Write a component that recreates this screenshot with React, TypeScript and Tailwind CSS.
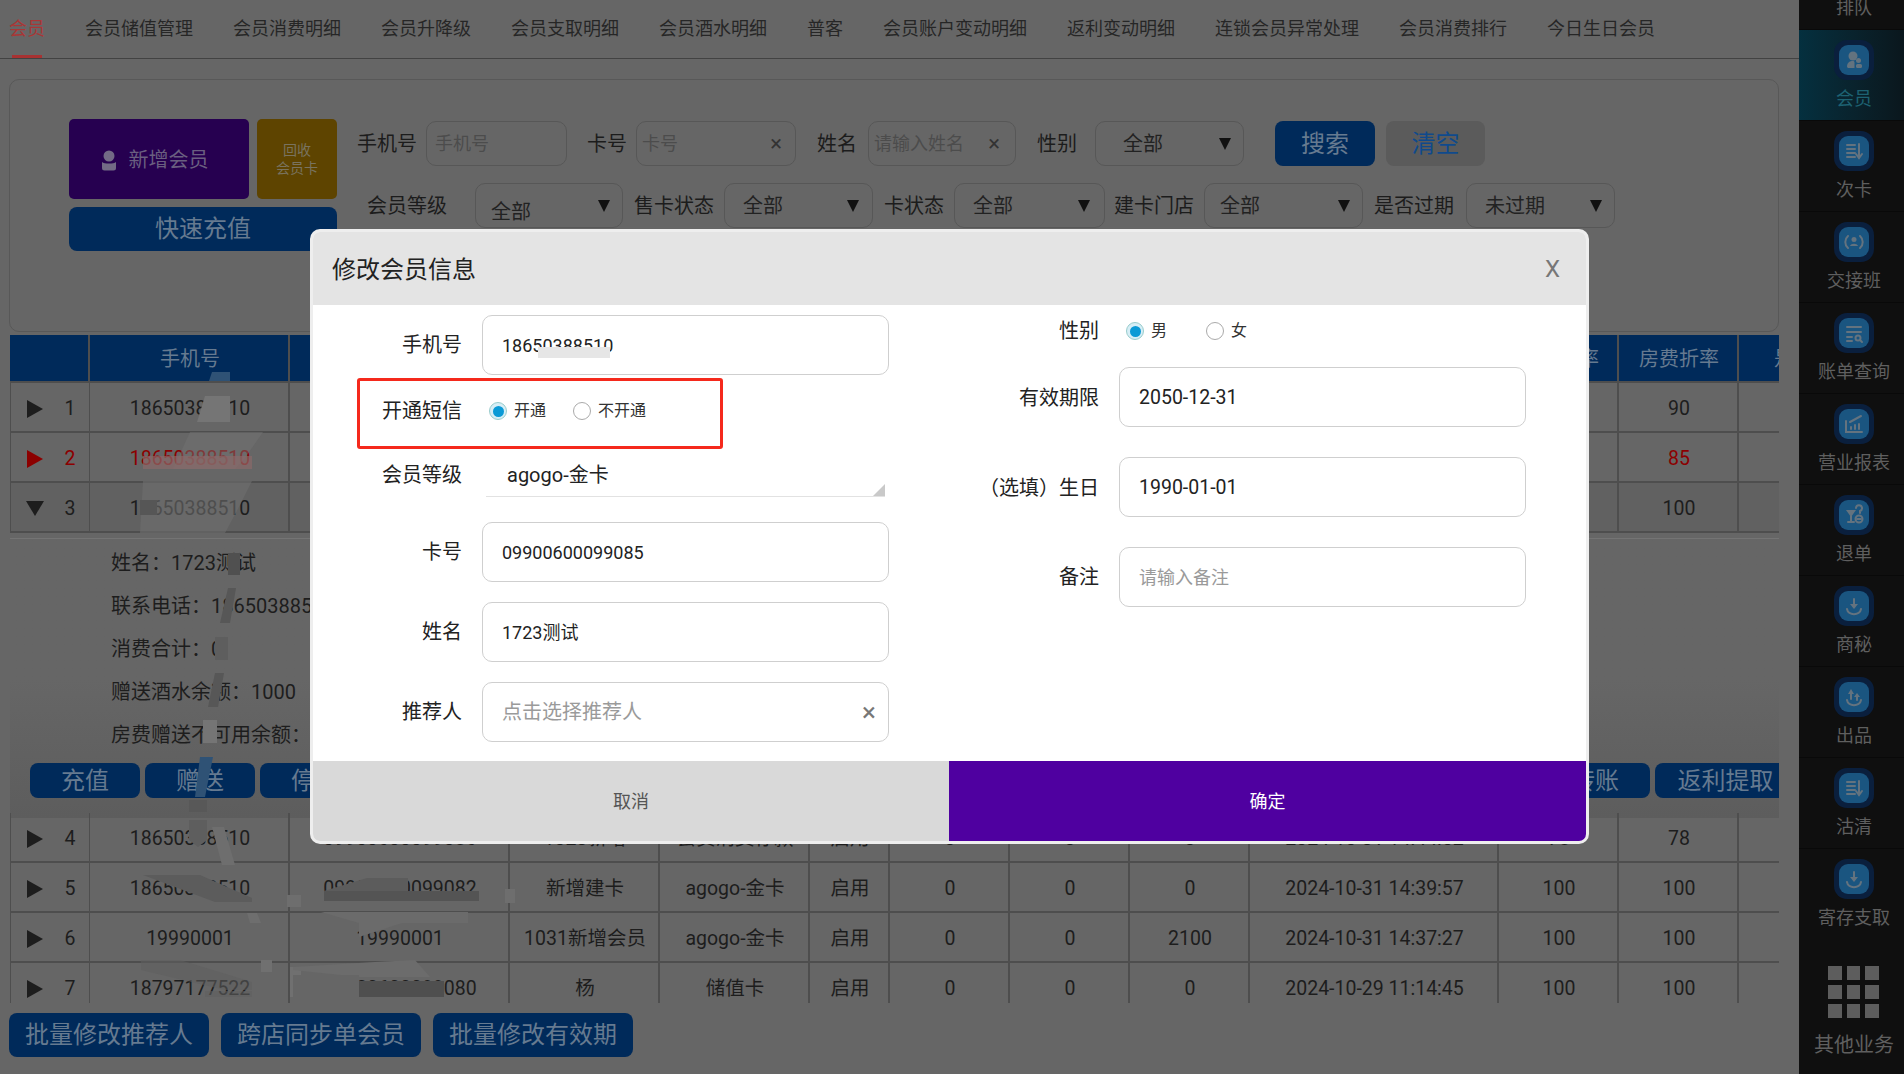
import React from "react";

const cols = "grid grid-cols-[80px_200px_220px_150px_150px_80px_120px_120px_120px_249px_120px_120px_150px]";

const tabs = ["会员储值管理","会员消费明细","会员升降级","会员支取明细","会员酒水明细","普客","会员账户变动明细","返利变动明细","连锁会员异常处理","会员消费排行","今日生日会员"];

const Label = ({ w, ml, children }: { w: string; ml: string; children: React.ReactNode }) => (
  <span className={`${w} ${ml} shrink-0 text-[20px] text-[#1c1c1c] whitespace-nowrap text-center`}>{children}</span>
);

const Arrow = () => (
  <svg width="12" height="12" viewBox="0 0 12 12" className="shrink-0"><polygon points="0,0 12,0 6,12" fill="#111" /></svg>
);

const Box = ({ cls, children }: { cls: string; children?: React.ReactNode }) => (
  <div className={`${cls} h-[45px] shrink-0 rounded-[10px] border border-[#575757] flex items-center text-[#222]`}>{children}</div>
);

function FilterPanel() {
  return (
    <div className="mx-[9px] mt-[20px] h-[253px] w-[1770px] rounded-[10px] border border-[#585858] flex pl-[59px] pt-[39px] shrink-0">
      <div className="w-[268px] shrink-0">
        <div className="flex gap-[8px]">
          <div className="w-[180px] h-[80px] rounded-[5px] bg-[#260050] flex items-center justify-center gap-[13px] pr-[8px] pt-[2px] text-[#6a5f80]">
            <svg width="14" height="21" viewBox="0 0 14 21"><circle cx="7" cy="6" r="5.5" fill="#726a85" /><path d="M0 12c2 2 12 2 14 0v6a2.500 2.500 0 0 1-2.500 2.500h-9A2.500 2.500 0 0 1 0 18z" fill="#726a85" /></svg>
            <span className="text-[20px]">新增会员</span>
          </div>
          <div className="w-[80px] h-[80px] rounded-[5px] bg-[#5e4400] flex flex-col items-center justify-center text-[14px] leading-[18px] text-[#79735f]">
            <span>回收</span><span>会员卡</span>
          </div>
        </div>
        <div className="mt-[8px] h-[44px] rounded-[8px] bg-[#002a5a] flex items-center justify-center text-[24px] text-[#667a90]">快速充值</div>
      </div>
      <div className="ml-[20px] mt-[2px]">
        <div className="flex items-center">
          <Label w="w-[60px]" ml="ml-0">手机号</Label>
          <Box cls="w-[141px] ml-[9px] pl-[8px]"><span className="text-[18px] text-[#4c4c4c]">手机号</span></Box>
          <Label w="w-[40px]" ml="ml-[20px]">卡号</Label>
          <Box cls="w-[160px] ml-[9px] pl-[5px] justify-between pr-[13px]"><span className="text-[18px] text-[#4c4c4c]">卡号</span><span className="text-[22px] text-[#333]">×</span></Box>
          <Label w="w-[40px]" ml="ml-[21px]">姓名</Label>
          <Box cls="w-[148px] ml-[11px] pl-[5px] justify-between pr-[15px]"><span className="text-[18px] text-[#4c4c4c]">请输入姓名</span><span className="text-[22px] text-[#333]">×</span></Box>
          <Label w="w-[40px]" ml="ml-[21px]">性别</Label>
          <Box cls="w-[149px] ml-[18px] pl-[27px] pr-[12px] justify-between"><span className="text-[20px]">全部</span><Arrow /></Box>
          <div className="ml-[31px] w-[100px] h-[45px] rounded-[8px] bg-[#002a5a] flex items-center justify-center text-[24px] text-[#667a90]">搜索</div>
          <div className="ml-[11px] w-[99px] h-[45px] rounded-[8px] bg-[#5b5b5b] flex items-center justify-center text-[24px] text-[#0f4a8c]">清空</div>
        </div>
        <div className="flex items-center mt-[17px]">
          <Label w="w-[80px]" ml="ml-[10px]">会员等级</Label>
          <Box cls="w-[148px] ml-[28px] pl-[15px] pr-[12px] justify-between"><span className="text-[20px] mt-[12px]">全部</span><Arrow /></Box>
          <Label w="w-[80px]" ml="ml-[11px]">售卡状态</Label>
          <Box cls="w-[149px] ml-[10px] pl-[18px] pr-[13px] justify-between"><span className="text-[20px]">全部</span><Arrow /></Box>
          <Label w="w-[60px]" ml="ml-[11px]">卡状态</Label>
          <Box cls="w-[151px] ml-[10px] pl-[18px] pr-[14px] justify-between"><span className="text-[20px]">全部</span><Arrow /></Box>
          <Label w="w-[80px]" ml="ml-[9px]">建卡门店</Label>
          <Box cls="w-[159px] ml-[10px] pl-[15px] pr-[12px] justify-between"><span className="text-[20px]">全部</span><Arrow /></Box>
          <Label w="w-[80px]" ml="ml-[11px]">是否过期</Label>
          <Box cls="w-[149px] ml-[12px] pl-[18px] pr-[12px] justify-between"><span className="text-[20px]">未过期</span><Arrow /></Box>
        </div>
      </div>
    </div>
  );
}

const headers = ["", "手机号", "卡号", "姓名", "会员等级", "状态", "储值余额", "赠送余额", "酒水余额", "创建时间", "酒水折率", "房费折率", "是否过期"];

type R = { n: number; cells: string[]; red?: boolean; open?: boolean };
const top: R[] = [
  { n: 1, cells: ["18650388510","09900600099081","张三","agogo-金卡","启用","0","0","0","2024-11-01 10:12:30","90","90",""] },
  { n: 2, cells: ["18650388510","09900600099083","李四","agogo-金卡","启用","0","0","0","2024-11-01 09:20:11","85","85",""], red: true },
  { n: 3, cells: ["18650388510","09900600099085","1723测试","agogo-金卡","启用","0","0","0","2024-10-31 17:23:40","100","100",""], open: true },
];
const bottom: R[] = [
  { n: 4, cells: ["18650388510","09900600099086","1023新增","会员消费存款","启用","0","0","0","2024-10-31 14:44:52","78","78",""] },
  { n: 5, cells: ["18650388510","09900600099082","新增建卡","agogo-金卡","启用","0","0","0","2024-10-31 14:39:57","100","100",""] },
  { n: 6, cells: ["19990001","19990001","1031新增会员","agogo-金卡","启用","0","0","2100","2024-10-31 14:37:27","100","100",""] },
  { n: 7, cells: ["18797177522","09900600099080","杨","储值卡","启用","0","0","0","2024-10-29 11:14:45","100","100",""] },
];

function Row({ r }: { r: R }) {
  const color = r.red ? "text-[#8c0000]" : "text-[#1d1d1d]";
  return (
    <div className={`${cols} h-[50px] border-b-2 border-[#4e4e4e] text-[19.500px] ${color} ${r.open ? "bg-[#616161]" : ""}`}>
      <div className="flex items-center border-x border-[#4e4e4e] pt-[3px]">
        {r.open ? (
          <svg width="18" height="15" viewBox="0 0 18 15" className="ml-[15px]"><polygon points="0,0 18,0 9,15" fill="#1d1d1d" /></svg>
        ) : (
          <svg width="16" height="18" viewBox="0 0 16 18" className="ml-[16px]"><polygon points="0,0 16,9 0,18" fill={r.red ? "#8c0000" : "#1d1d1d"} /></svg>
        )}
        <span className={`${r.open ? "ml-[16px]" : "ml-[17px]"} w-[20px] text-center`}>{r.n}</span>
      </div>
      {r.cells.map((c, i) => (
        <div key={i} className="flex items-center justify-center border-r-2 border-[#4e4e4e] whitespace-nowrap overflow-hidden pl-[2px] pt-[3px]">{c}</div>
      ))}
    </div>
  );
}

function Detail() {
  const lines = ["姓名：1723测试","联系电话：18650388510","消费合计：0","赠送酒水余额：1000","房费赠送不可用余额：0"];
  return (
    <div className="h-[280px] w-[1769px] bg-gradient-to-b from-[#666] via-[#666] to-[#5d5d5d] border-t border-[#747474] mt-[5px] -mb-[5px] flex flex-col">
      <div className="pl-[101px] pt-[10px] flex flex-col gap-[15px] text-[20px] leading-[28px] text-[#1d1d1d]">
        {lines.map((l) => <div key={l} className="whitespace-nowrap">{l}</div>)}
      </div>
      <div className="flex w-[1786px] mt-[14px] pl-[20px] text-[24px] text-[#667a90]">
        {["充值","赠送","停用"].map((t) => (
          <div key={t} className="w-[110px] mr-[5px] h-[35px] rounded-[8px] bg-[#002a5a] flex items-center justify-center">{t}</div>
        ))}
        <div className="ml-auto w-[110px] h-[35px] rounded-[8px] bg-[#002a5a] flex items-center justify-center">转账</div>
        <div className="ml-[5px] w-[141px] h-[35px] rounded-[8px] bg-[#002a5a] flex items-center justify-center">返利提取</div>
      </div>
    </div>
  );
}

function Table() {
  return (
    <div className="mx-[10px] mt-[3px] w-[1769px] h-[668px] overflow-hidden shrink-0">
      <div className={`${cols} w-[1909px] h-[46px] bg-[#002a5a] text-[20px] text-[#667a90]`}>
        {headers.map((h, i) => (
          <div key={i} className="flex items-center justify-center border-r-2 border-[#4e4e4e] whitespace-nowrap pl-[2px] pt-[2px]">{h}</div>
        ))}
      </div>
      <div className="w-[1909px] border-t-2 border-[#4e4e4e]">
        {top.map((r) => <Row key={r.n} r={r} />)}
        <Detail />
        {bottom.map((r) => <Row key={r.n} r={r} />)}
      </div>
    </div>
  );
}

const Field = ({ label, value, placeholder, w, suffix, big }: { label: string; value?: string; placeholder?: boolean; w: string; suffix?: boolean; big?: boolean }) => (
  <div className="flex items-center">
    <span className={`w-[149px] text-right text-[20px] text-[#222] whitespace-nowrap ${big ? "pt-[2px]" : ""}`}>{label}</span>
    <div className={`${w} ml-[20px] h-[60px] rounded-[10px] border border-[#cfcfcf] flex items-center justify-between pl-[19px] pr-[12px]`}>
      <span className={placeholder ? (suffix ? "text-[20px] text-[#9a9a9a]" : "text-[18px] text-[#9a9a9a]") : big ? "text-[19.500px] text-[#222] pt-[2px]" : "text-[18px] text-[#222]"}>{value}</span>
      {suffix && <span className="text-[26px] leading-none text-[#777]">×</span>}
    </div>
  </div>
);

const Radio = ({ on, text, cls }: { on?: boolean; text: string; cls: string }) => (
  <div className={`flex items-center ${cls}`}>
    <span className={`w-[18px] h-[18px] rounded-full border flex items-center justify-center ${on ? "border-[#9cc] bg-[#d6eef6]" : "border-[#aaa] bg-white"}`}>
      {on && <span className="w-[11px] h-[11px] rounded-full bg-[#0a9ad6]" />}
    </span>
    <span className="ml-[7px] text-[16px] text-[#333] whitespace-nowrap">{text}</span>
  </div>
);

function Modal() {
  return (
    <div className="absolute left-[310px] top-[229px] w-[1279px] h-[615px] rounded-[10px] border-[3px] border-[#eeeeee] bg-white overflow-hidden flex flex-col">
      <div className="h-[73px] shrink-0 bg-[#e4e4e4] flex items-center justify-between pl-[19px] pr-[26px]">
        <span className="text-[24px] text-[#222] pt-[2px]">修改会员信息</span>
        <span className="text-[24px] text-[#777]">X</span>
      </div>
      <div className="flex-1 flex pt-[10px]">
        <div className="w-[576px] flex flex-col">
          <Field label="手机号" value="18650388510" w="w-[407px]" />
          <div className="h-[74px] pb-[2px] flex items-center">
            <span className="w-[149px] text-right text-[20px] text-[#222]">开通短信</span>
            <Radio on text="开通" cls="ml-[27px]" />
            <Radio text="不开通" cls="ml-[27px]" />
          </div>
          <div className="h-[44px] mt-[4px] flex items-center">
            <span className="w-[149px] text-right text-[20px] text-[#222]">会员等级</span>
            <div className="relative ml-[24px] w-[399px] h-[44px] border-b border-[#e2e2e2] flex items-center pl-[21px] text-[20px] text-[#222]">
              agogo-金卡
              <svg width="12" height="12" viewBox="0 0 12 12" className="absolute right-0 bottom-0"><polygon points="12,0 12,12 0,12" fill="#c9c9c9" /></svg>
            </div>
          </div>
          <div className="mt-[25px] flex flex-col gap-[20px]">
            <Field label="卡号" value="09900600099085" w="w-[407px]" />
            <Field label="姓名" value="1723测试" w="w-[407px]" />
            <Field label="推荐人" value="点击选择推荐人" placeholder suffix w="w-[407px]" />
          </div>
        </div>
        <div className="ml-[61px] flex flex-col">
          <div className="h-[32px] flex items-center">
            <span className="w-[149px] text-right text-[20px] text-[#222]">性别</span>
            <Radio on text="男" cls="ml-[27px]" />
            <Radio text="女" cls="ml-[39px]" />
          </div>
          <div className="mt-[20px] flex flex-col gap-[30px]">
            <Field label="有效期限" value="2050-12-31" big w="w-[407px]" />
            <Field label="（选填）生日" value="1990-01-01" big w="w-[407px]" />
            <Field label="备注" value="请输入备注" placeholder w="w-[407px]" />
          </div>
        </div>
      </div>
      <div className="h-[80px] shrink-0 flex text-[18px]">
        <div className="w-[636px] bg-[#d9d9d9] flex items-center justify-center text-[#555]">取消</div>
        <div className="flex-1 bg-[#4f00a0] flex items-center justify-center text-white">确定</div>
      </div>
    </div>
  );
}

function Smudges() {
  const p: [string, string, number][] = [
    ["212,372 230,372 230,381 209,381", "#2f5275", 1],
    ["205,396 230,396 230,422 197,422", "#757575", 1],
    ["190,432 263,432 245,458 235,469 173,469", "#727272", 0.5],
    ["143,456 252,456 252,469 143,469", "#8a6a6a", 0.7],
    ["143,481 252,481 240,505 225,533 140,533", "#6e6e6e", 0.6],
    ["140,500 157,500 157,515 140,515", "#565656", 1],
    ["228,553 240,553 240,575 228,575", "#505050", 1],
    ["228,588 236,588 230,623 220,623", "#575757", 1],
    ["215,637 228,637 228,660 215,660", "#5e5e5e", 1],
    ["215,673 224,673 218,707 208,707", "#575757", 1],
    ["203,720 217,720 217,743 203,743", "#757575", 1],
    ["200,757 213,757 205,797 195,797", "#2f5275", 1],
    ["189,800 207,800 207,812 189,812", "#585858", 1],
    ["189,820 207,820 207,840 198,847 189,840", "#5e5e5e", 1],
    ["212,827 224,827 235,865 222,865", "#6e6e6e", 1],
    ["143,875 200,875 252,898 252,902 215,902", "#5c5c5c", 1],
    ["247,913 257,913 261,923 250,923", "#6e6e6e", 1],
    ["287,895 301,895 301,907 287,907", "#6e6e6e", 1],
    ["367,878 408,878 408,891 324,891", "#5c5c5c", 1],
    ["324,891 479,891 479,901 324,901", "#545454", 1],
    ["505,889 515,889 515,903 505,903", "#6e6e6e", 1],
    ["321,912 468,912 468,923 402,923 359,937 359,923", "#6b6b6b", 1],
    ["141,960 180,960 252,982 252,990 225,990 141,970", "#5f5f5f", 0.55],
    ["205,991 252,991 252,997 205,997", "#5f5f5f", 0.6],
    ["261,960 272,960 272,972 261,972", "#707070", 1],
    ["290,967 301,967 301,997 290,997", "#707070", 1],
    ["293,967 375,962 415,960 430,977 360,977 293,970", "#6c6c6c", 1],
    ["293,975 359,975 359,998 293,998", "#666666", 1],
    ["359,981 444,981 444,997 359,997", "#4f4f4f", 1],
  ];
  return (
    <svg className="absolute left-0 top-0 pointer-events-none" width="600" height="1010" viewBox="0 0 600 1010">
      {p.map(([pts, fill, o], i) => <polygon key={i} points={pts} fill={fill} fillOpacity={o} />)}
    </svg>
  );
}

const f = "#64737f";
const s = { stroke: f, strokeWidth: 2, fill: "none", strokeLinecap: "round" as const };
const icons: Record<string, React.ReactNode> = {
  users: <><circle cx="14" cy="11" r="4.500" fill={f} /><circle cx="19.500" cy="15.500" r="2.500" fill={f} /><path d="M8 22c0-5 3-6 6-6 1 0 1.500.5 1.500 2s0 4 0 5H9z" fill={f} /><rect x="17" y="19" width="6" height="4" rx="1.500" fill={f} /></>,
  listDown: <><path d="M8 9h8M8 13h8M8 17h8M8 21h8" {...s} /><path d="M20 8v13M17 18l3 4 3-4" {...s} /></>,
  cycle: <><circle cx="15" cy="12.500" r="2.500" fill={f} /><path d="M11 19c1-3 7-3 8 0z" fill={f} /><path d="M9 9a8 8 0 0 0 0 12M21 9a8 8 0 0 1 0 12" {...s} /></>,
  search: <><path d="M8 9h14M8 14h14M8 19h5M8 23h5" {...s} /><circle cx="19" cy="20" r="2.500" {...s} /><path d="M21 22l2 2" {...s} /></>,
  chart: <><path d="M7 12v11h16M12 20v-2M16 20v-4M20 20v-5" {...s} /><path d="M11 13l11-6" {...s} /></>,
  drink: <><path d="M7 10h10l-5 7z" fill={f} /><path d="M12 16v6M9 22h6" {...s} /><circle cx="20" cy="19" r="3.500" {...s} /><path d="M18 19h4" {...s} /><path d="M17 8a3 3 0 1 1 4 3v2" {...s} /></>,
  down: <><path d="M8 18c1 7 13 7 14 0" {...s} /><path d="M15 8v8" {...s} /><polygon points="11,13 19,13 15,18" fill={f} /></>,
  up: <><path d="M8 18c1 7 13 7 14 0" {...s} /><polygon points="9,12 15,12 12,7" fill={f} /><path d="M12 11v6" {...s} /><polygon points="15,15 21,15 18,11" fill={f} /><path d="M18 14v4" {...s} /></>,
};

const items: [string, string][] = [["次卡","listDown"],["交接班","cycle"],["账单查询","search"],["营业报表","chart"],["退单","drink"],["商秘","down"],["出品","up"],["沽清","listDown"],["寄存支取","down"]];

const SideIcon = ({ name }: { name: string }) => (
  <div className="w-[40px] h-[40px] rounded-[13px] bg-[#0a1f3d] flex items-center justify-center">
    <svg width="30" height="30" viewBox="0 0 30 30" className="rounded-[9px] bg-[#1a5580]">{icons[name]}</svg>
  </div>
);

function Sidebar() {
  return (
    <div className="w-[105px] h-full shrink-0 bg-[#0f0f0f] flex flex-col items-stretch text-[18px] text-[#5f5f5f]">
      <div className="h-[30px] shrink-0 flex justify-center leading-[16px] border-b border-[#090909] pl-[5px]">排队</div>
      <div className="h-[91px] shrink-0 flex flex-col items-center pt-[10px] pl-[5px] border-b border-[#090909] bg-gradient-to-r from-[#04303f] to-[#0a171d] text-[#1d6272]">
        <SideIcon name="users" />
        <span className="mt-[7px] leading-[24px]">会员</span>
      </div>
      {items.map(([t, ic], i) => (
        <div key={t} className={`h-[91px] shrink-0 flex flex-col items-center pt-[10px] pl-[5px] ${i < items.length - 1 ? "border-b border-[#090909]" : ""}`}>
          <SideIcon name={ic} />
          <span className="mt-[7px] leading-[24px] whitespace-nowrap">{t}</span>
        </div>
      ))}
      <div className="mt-[26px] ml-[29px] grid grid-cols-3 gap-[5px] w-[51px]">
        {Array.from({ length: 9 }).map((_, i) => <span key={i} className="w-[13.500px] h-[14px] bg-[#5d5d5d]" />)}
      </div>
      <div className="mt-[13px] pl-[5px] text-center text-[20px] leading-[28px] whitespace-nowrap">其他业务</div>
    </div>
  );
}

export default function App() {
  return (
    <div className="relative w-[1904px] h-[1074px] overflow-hidden bg-[#666] flex font-['Roboto','Noto_Sans_CJK_SC',sans-serif]">
      <div className="w-[1799px] h-full shrink-0 flex flex-col overflow-hidden">
        <div className="h-[59px] shrink-0 border-b border-[#424242] flex pl-[9px] text-[18px] text-[#262626] whitespace-nowrap">
          <div className="relative h-[58px] pt-[15px] text-[#a93636] w-[36px]">
            会员
            <span className="absolute left-[3px] bottom-0 w-[30px] h-[3px] bg-[#a83232]" />
          </div>
          {tabs.map((t) => <div key={t} className="ml-[40px] pt-[15px]">{t}</div>)}
        </div>
        <FilterPanel />
        <Table />
        <div className="flex gap-[12px] ml-[9px] mt-[10px] text-[24px] text-[#667a90]">
          {["批量修改推荐人","跨店同步单会员","批量修改有效期"].map((t) => (
            <div key={t} className="w-[200px] h-[44px] rounded-[8px] bg-[#002a5a] flex items-center justify-center whitespace-nowrap">{t}</div>
          ))}
        </div>
      </div>
      <Sidebar />
      <Smudges />
      <Modal />
      <div className="absolute left-[357px] top-[378px] w-[366px] h-[71px] rounded-[3px] border-[3px] border-[#f5291c]" />
      <div className="absolute left-[538px] top-[347px] w-[72px] h-[11px] bg-[#e6e6e6]" />
    </div>
  );
}
